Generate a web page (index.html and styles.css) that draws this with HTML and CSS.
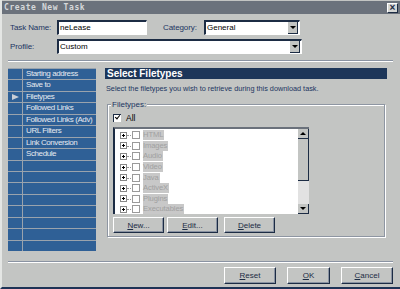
FILE: index.html
```html
<!DOCTYPE html>
<html lang="en">
  <head>
    <meta charset="UTF-8" />
    <title>Create New Task</title>
    <link rel="stylesheet" href="styles.css">
  </head>
  <body>
    <div class="window">
      <div class="titlebar">
        <span class="title">Create New Task</span>
        <span class="close">&#215;</span>
      </div>

      <!-- Cabecalho do formulario -->
      <div class="top-form">
        <div class="form-row">
          <label class="lbl">Task Name:</label>
          <div class="field name-field">neLease</div>
          <label class="lbl cat-lbl">Category:</label>
          <div class="field select cat-field">General<span class="drop"></span></div>
        </div>
        <div class="form-row">
          <label class="lbl">Profile:</label>
          <div class="field select profile-field">Custom<span class="drop"></span></div>
        </div>
      </div>

      <div class="sep"></div>

      <div class="main">
        <ul class="sidebar">
          <li><span class="mark"></span><span class="item">Starting address</span></li>
          <li><span class="mark"></span><span class="item">Save to</span></li>
          <li><span class="mark"><span class="arrow"></span></span><span class="item">Filetypes</span></li>
          <li><span class="mark"></span><span class="item">Followed Links</span></li>
          <li><span class="mark"></span><span class="item">Followed Links (Adv)</span></li>
          <li><span class="mark"></span><span class="item">URL Filters</span></li>
          <li><span class="mark"></span><span class="item">Link Conversion</span></li>
          <li><span class="mark"></span><span class="item">Schedule</span></li>
          <li><span class="mark"></span><span class="item"></span></li>
          <li><span class="mark"></span><span class="item"></span></li>
          <li><span class="mark"></span><span class="item"></span></li>
          <li><span class="mark"></span><span class="item"></span></li>
          <li><span class="mark"></span><span class="item"></span></li>
          <li><span class="mark"></span><span class="item"></span></li>
          <li><span class="mark"></span><span class="item"></span></li>
          <li><span class="mark"></span><span class="item"></span></li>
        </ul>

        <div class="panel">
          <div class="panel-head">Select Filetypes</div>
          <p class="panel-desc">Select the filetypes you wish to retrieve during this download task.</p>

          <div class="group">
            <span class="legend">Filetypes:</span>
            <div class="all-row"><span class="check checked"></span>All</div>
            <div class="tree">
              <ul class="tree-list">
                <li><span class="plus"></span><span class="box"></span><span class="name">HTML</span></li>
                <li><span class="plus"></span><span class="box"></span><span class="name">Images</span></li>
                <li><span class="plus"></span><span class="box"></span><span class="name">Audio</span></li>
                <li><span class="plus"></span><span class="box"></span><span class="name">Video</span></li>
                <li><span class="plus"></span><span class="box"></span><span class="name">Java</span></li>
                <li><span class="plus"></span><span class="box"></span><span class="name">ActiveX</span></li>
                <li><span class="plus"></span><span class="box"></span><span class="name">Plugins</span></li>
                <li><span class="plus"></span><span class="box"></span><span class="name">Executables</span></li>
              </ul>
              <div class="scrollbar">
                <span class="sb-btn up"></span>
                <span class="sb-thumb"></span>
                <span class="sb-track"></span>
                <span class="sb-btn down"></span>
              </div>
            </div>
            <div class="group-buttons">
              <button class="btn"><u>N</u>ew...</button>
              <button class="btn"><u>E</u>dit...</button>
              <button class="btn btn-del"><u>D</u>elete</button>
            </div>
          </div>
        </div>
      </div>

      <div class="sep sep-bottom"></div>

      <div class="footer">
        <button class="btn btn-foot"><u>R</u>eset</button>
        <button class="btn btn-ok"><u>O</u>K</button>
        <button class="btn btn-foot"><u>C</u>ancel</button>
      </div>
    </div>
  </body>
</html>
```

FILE: styles.css
```css
body {
  margin: 0;
  padding: 0;
  font-family: "Liberation Sans", Arial, sans-serif;
  font-size: 8px;
  color: #1c3562;
  background-color: #c3c5c3;
}

.window {
  width: 398px;
  height: 287px;
  background-color: #c3c5c3;
  border-left: 2px solid #e4e6e4;
  border-bottom: 2px solid #1e3356;
  display: flex;
  flex-direction: column;
  overflow: hidden;
}

.titlebar {
  height: 13px;
  margin-top: 1px;
  background-color: #6b727c;
  display: flex;
  align-items: center;
  justify-content: space-between;
  padding: 0 2px;
}

.title {
  font-family: "DejaVu Sans Mono", monospace;
  font-weight: bold;
  font-size: 8px;
  letter-spacing: 0.6px;
  color: #d6d8da;
}

.close {
  width: 9px;
  height: 8px;
  background-color: #d4d6d4;
  border: 1px solid #1c2c44;
  border-top-color: #fff;
  border-left-color: #fff;
  font-size: 10px;
  line-height: 8px;
  text-align: center;
  font-weight: bold;
  color: #1c2c44;
}

/* formulario superior */
.top-form {
  padding: 6px 0 0 8px;
  display: flex;
  flex-direction: column;
  gap: 4px;
}

.form-row {
  display: flex;
  align-items: center;
  height: 15px;
}

.lbl {
  width: 47px;
  white-space: nowrap;
  letter-spacing: -0.1px;
}

.cat-lbl {
  margin-left: 16px;
  width: 41px;
}

.field {
  height: 15px;
  box-sizing: border-box;
  background-color: #fff;
  border: 1px solid #fff;
  border-top: 2px solid #1c2c44;
  border-left: 2px solid #1c2c44;
  color: #000;
  font-size: 8px;
  line-height: 11px;
  padding-left: 1px;
  position: relative;
}

.name-field {
  width: 90px;
}

.cat-field {
  width: 96px;
}

.profile-field {
  width: 245px;
}

.drop {
  position: absolute;
  right: 1px;
  top: 0;
  width: 9px;
  height: 11px;
  background-color: #c3c5c3;
  border-right: 1px solid #1c2c44;
  border-bottom: 1px solid #1c2c44;
}

.drop::after {
  content: "";
  position: absolute;
  left: 2px;
  top: 4px;
  border-left: 3px solid transparent;
  border-right: 3px solid transparent;
  border-top: 3px solid #000;
}

.sep {
  margin: 6px 7px 0 6px;
  height: 1px;
  background-color: #8a93a2;
  border-bottom: 1px solid #fff;
}

/* corpo principal */
.main {
  display: flex;
  margin-top: 6px;
  height: 185px;
}

.sidebar {
  list-style: none;
  margin: 0 0 0 6px;
  padding: 1px 0 0 0;
  width: 88px;
  height: 183px;
  box-sizing: border-box;
  display: grid;
  grid-template-rows: repeat(16, 1fr);
  row-gap: 1px;
  background-color: #9aa3ad;
}

.sidebar li {
  display: flex;
  gap: 1px;
}

.mark {
  width: 14px;
  background-color: #2f6096;
  position: relative;
}

.arrow {
  position: absolute;
  left: 4px;
  top: 2px;
  border-top: 3.5px solid transparent;
  border-bottom: 3.5px solid transparent;
  border-left: 7px solid #c9ced6;
}

.item {
  flex: 1;
  background-color: #2f6096;
  color: #e6eaf0;
  padding-left: 3px;
  font-size: 8px;
  letter-spacing: -0.4px;
  line-height: 10px;
  white-space: nowrap;
  overflow: hidden;
}

.panel {
  margin-left: 9px;
  width: 282px;
}

.panel-head {
  background-color: #1d3659;
  color: #fff;
  font-weight: bold;
  font-size: 10px;
  height: 11px;
  line-height: 11px;
  padding-left: 2px;
}

.panel-desc {
  margin: 5px 0 0 1px;
  font-size: 7.3px;
  white-space: nowrap;
}

.group {
  position: relative;
  margin: 11px 0 0 2px;
  padding: 8px 0 0 5px;
  width: 278px;
  height: 133px;
  box-sizing: border-box;
  border: 1px solid #8e96a2;
  box-shadow: inset 1px 1px 0 #fff, 1px 1px 0 #fff;
}

.legend {
  position: absolute;
  left: 3px;
  top: -5px;
  padding: 0 1px;
  background-color: #c3c5c3;
  font-size: 8px;
}

.all-row {
  display: flex;
  align-items: center;
  gap: 5px;
  color: #000;
  font-size: 8.5px;
  height: 10px;
}

.check {
  width: 7px;
  height: 7px;
  background-color: #fff;
  border-top: 1px solid #1c2c44;
  border-left: 1px solid #1c2c44;
  position: relative;
}

.checked::after {
  content: "";
  position: absolute;
  left: 1px;
  top: 0;
  width: 4px;
  height: 2px;
  border-left: 1.5px solid #000;
  border-bottom: 1.5px solid #000;
  transform: rotate(-50deg);
}

.tree {
  margin-top: 4px;
  width: 196px;
  height: 87px;
  box-sizing: border-box;
  background-color: #fff;
  border-top: 2px solid #6a717b;
  border-left: 2px solid #1c2c44;
  display: flex;
}

.tree-list {
  flex: 1;
  list-style: none;
  margin: 0;
  padding: 1px 0 0 5px;
}

.tree-list li {
  display: flex;
  align-items: center;
  height: 10.6px;
}

.plus {
  width: 5px;
  height: 5px;
  border: 1px solid #888;
  position: relative;
  margin-right: 1px;
}

.plus::before {
  content: "";
  position: absolute;
  left: 1px;
  top: 2px;
  width: 3px;
  height: 1px;
  background-color: #000;
}

.plus::after {
  content: "";
  position: absolute;
  left: 2px;
  top: 1px;
  width: 1px;
  height: 3px;
  background-color: #000;
}

.box {
  width: 6px;
  height: 6px;
  border: 1px solid #9a9a9a;
  margin-left: 4px;
  position: relative;
}

.box::before {
  content: "";
  position: absolute;
  left: -6px;
  top: 3px;
  width: 4px;
  border-top: 1px dotted #999;
}

.name {
  margin-left: 3px;
  background-color: #c8c8c8;
  color: #a0a0a0;
  font-size: 7.6px;
  letter-spacing: -0.1px;
  line-height: 10px;
  padding-right: 1px;
}

.scrollbar {
  width: 11px;
  display: flex;
  flex-direction: column;
  background-color: #e2e2e2;
}

.sb-btn {
  height: 10px;
  background-color: #c3c5c3;
  border-right: 1px solid #1c2c44;
  border-bottom: 1px solid #1c2c44;
  box-sizing: border-box;
  position: relative;
}

.sb-btn::after {
  content: "";
  position: absolute;
  left: 2px;
  top: 3px;
  border-left: 3px solid transparent;
  border-right: 3px solid transparent;
}

.up::after {
  border-bottom: 3px solid #000;
}

.down::after {
  border-top: 3px solid #000;
}

.sb-thumb {
  height: 42px;
  background-color: #c3c5c3;
  border-right: 1px solid #1c2c44;
  border-bottom: 1px solid #1c2c44;
  box-sizing: border-box;
}

.sb-track {
  flex: 1;
}

.group-buttons {
  display: flex;
  gap: 3px;
  margin-top: 3px;
}

.btn {
  height: 16px;
  box-sizing: border-box;
  background-color: #c3c5c3;
  border: 1px solid #1c2c44;
  border-top-color: #fff;
  border-left-color: #fff;
  box-shadow: inset -1px -1px 0 #8a93a2;
  font-family: "Liberation Sans", Arial, sans-serif;
  font-size: 8px;
  color: #1c2c44;
  padding: 0;
  width: 51px;
}

.btn-del {
  margin-left: 3px;
}

.sep-bottom {
  margin-top: 8px;
}

.footer {
  display: flex;
  justify-content: flex-end;
  gap: 11px;
  padding: 4px 7px 0 0;
}

.btn-foot {
  width: 52px;
  height: 17px;
}

.btn-ok {
  width: 43px;
  height: 17px;
}
```
